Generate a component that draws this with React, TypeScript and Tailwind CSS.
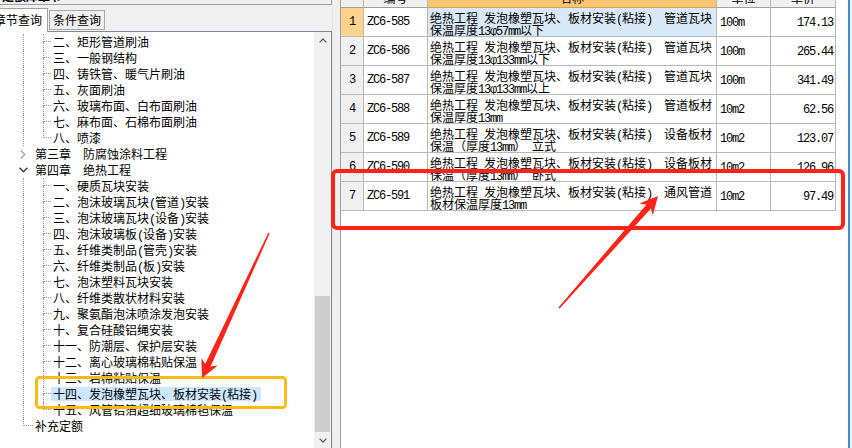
import React from "react"

const cjk = "font-['Noto_Sans_CJK_SC','Liberation_Sans',sans-serif]"
const line = "border-dotted border-[#9a9a9a]"

function M({ children }: { children: React.ReactNode }) {
    return <span className="font-['Liberation_Mono','Noto_Sans_CJK_SC',monospace] tracking-[-1.2px]">{children}</span>
}

// half-width parens like the original bitmap font
function P({ text }: { text: string }) {
    const parts = text.split(/([()])/)
    return <>{parts.map((p, i) => (p === "(" || p === ")" ? <M key={i}>{p}</M> : p))}</>
}

type Leaf = { text: string; last?: boolean; selected?: boolean }

const ch3: Leaf[] = [
    { text: "二、矩形管道刷油" },
    { text: "三、一般钢结构" },
    { text: "四、铸铁管、暖气片刷油" },
    { text: "五、灰面刷油" },
    { text: "六、玻璃布面、白布面刷油" },
    { text: "七、麻布面、石棉布面刷油" },
    { text: "八、喷漆", last: true },
]

const ch4: Leaf[] = [
    { text: "一、硬质瓦块安装" },
    { text: "二、泡沫玻璃瓦块(管道)安装" },
    { text: "三、泡沫玻璃瓦块(设备)安装" },
    { text: "四、泡沫玻璃板(设备)安装" },
    { text: "五、纤维类制品(管壳)安装" },
    { text: "六、纤维类制品(板)安装" },
    { text: "七、泡沫塑料瓦块安装" },
    { text: "八、纤维类散状材料安装" },
    { text: "九、聚氨酯泡沫喷涂发泡安装" },
    { text: "十、复合硅酸铝绳安装" },
    { text: "十一、防潮层、保护层安装" },
    { text: "十二、离心玻璃棉粘贴保温" },
    { text: "十三、岩棉粘贴保温" },
    { text: "十四、发泡橡塑瓦块、板材安装(粘接)", selected: true },
    { text: "十五、风管铝箔超细玻璃棉毡保温", last: true },
]

function LeafRow({ item }: { item: Leaf }) {
    return (
        <div className="h-[16px] flex">
            <div className="w-[23px] shrink-0" />
            <div className={`w-[20px] shrink-0 border-l ${line}`} />
            <div className="w-[8px] shrink-0 flex flex-col">
                <div className={`h-[8px] border-l border-b ${line}`} />
                <div className={`h-[8px] ${item.last ? "" : `border-l ${line}`}`} />
            </div>
            <div className={`h-[14px] my-[1px] pl-[2px] pr-[4px] leading-[14px] whitespace-nowrap ${item.selected ? "bg-[#cce8ff]" : ""}`}>
                <P text={item.text} />
            </div>
        </div>
    )
}

function ChapterRow({ text, open }: { text: string; open?: boolean }) {
    return (
        <div className="h-[16px] flex items-center">
            <div className="w-[17px] shrink-0" />
            <div className="w-[12px] shrink-0 flex justify-center">
                {open ? (
                    <svg width="9" height="6" viewBox="0 0 9 6"><polyline points="0.5,0.8 4.5,4.8 8.5,0.8" fill="none" stroke="#3a3a3a" strokeWidth="1.3" /></svg>
                ) : (
                    <svg width="6" height="9" viewBox="0 0 6 9"><polyline points="0.8,0.5 4.8,4.5 0.8,8.5" fill="none" stroke="#a6a6a6" strokeWidth="1.3" /></svg>
                )}
            </div>
            <div className="w-[6px] shrink-0" />
            <div className="leading-[16px] whitespace-nowrap">{text}</div>
        </div>
    )
}

type Row = { code: string; l1: string; l2: React.ReactNode; unit: string; price: string }

const rows: Row[] = [
    { code: "ZC6-585", l1: "管道瓦块", l2: <>保温厚度<M>13φ57mm</M>以下</>, unit: "100m", price: "174.13" },
    { code: "ZC6-586", l1: "管道瓦块", l2: <>保温厚度<M>13φ133mm</M>以下</>, unit: "100m", price: "265.44" },
    { code: "ZC6-587", l1: "管道瓦块", l2: <>保温厚度<M>13φ133mm</M>以上</>, unit: "100m", price: "341.49" },
    { code: "ZC6-588", l1: "管道板材", l2: <>保温厚度<M>13mm</M></>, unit: "10m2", price: "62.56" },
    { code: "ZC6-589", l1: "设备板材", l2: <>保温（厚度<M>13mm</M>）{"\u2002"}立式</>, unit: "10m2", price: "123.07" },
    { code: "ZC6-590", l1: "设备板材", l2: <>保温（厚度<M>13mm</M>）{"\u2002"}卧式</>, unit: "10m2", price: "126.96" },
    { code: "ZC6-591", l1: "通风管道", l2: <>板材保温厚度<M>13mm</M></>, unit: "10m2", price: "97.49" },
]

const cell = "border-r border-b border-[#b9b9b9] shrink-0 h-full"

export default function App() {
    return (
        <div className={`relative w-[852px] h-[448px] overflow-hidden flex bg-[#f0f0f0] text-[12px] text-black ${cjk}`}>
            {/* left panel */}
            <div className="w-[332px] shrink-0 flex flex-col">
                <div className="h-[5px] shrink-0 border-b border-r border-[#a0a0a0] overflow-hidden">
                    <div className="mt-[-11px] ml-[2px] leading-[14px] font-bold">定额库章节</div>
                </div>
                <div className="h-[26px] shrink-0 flex items-end">
                    <div className="relative z-10 mb-[-1px] h-[24px] w-[48px] bg-white border-t border-r border-[#a0a0a0] overflow-hidden">
                        <div className="ml-[-6px] mt-[3px] leading-[16px] whitespace-nowrap">章节查询</div>
                    </div>
                    <div className="ml-[1px] mb-[1px] h-[20px] w-[56px] border border-[#a9a9a9] bg-[#f0f0f0] pl-[3px] leading-[18px]">条件查询</div>
                </div>
                <div className="flex-1 flex bg-white border-t border-r border-[#828790] min-h-0">
                    <div className="flex-1 pt-[2px] overflow-hidden">
                        {ch3.map((it) => <LeafRow key={it.text} item={it} />)}
                        <ChapterRow text="第三章　防腐蚀涂料工程" />
                        <ChapterRow text="第四章　绝热工程" open />
                        {ch4.map((it) => <LeafRow key={it.text} item={it} />)}
                        <div className="h-[16px] flex">
                            <div className="w-[23px] shrink-0" />
                            <div className="w-[10px] shrink-0">
                                <div className={`h-[8px] border-l border-b ${line}`} />
                            </div>
                            <div className="ml-[2px] leading-[16px]">补充定额</div>
                        </div>
                    </div>
                    <div className="w-[17px] shrink-0 bg-[#f0f0f0] flex flex-col">
                        <div className="h-[17px] flex items-center justify-center">
                            <svg width="8" height="5" viewBox="0 0 8 5"><polyline points="0.6,4.4 4,1 7.4,4.4" fill="none" stroke="#606060" strokeWidth="1.3" /></svg>
                        </div>
                        <div className="flex-1 flex flex-col justify-end px-[1px]">
                            <div className="h-[136px] bg-[#cdcdcd]" />
                        </div>
                        <div className="h-[16px] flex items-center justify-center">
                            <svg width="8" height="5" viewBox="0 0 8 5"><polyline points="0.6,0.6 4,4 7.4,0.6" fill="none" stroke="#606060" strokeWidth="1.3" /></svg>
                        </div>
                    </div>
                </div>
            </div>

            {/* splitter */}
            <div className="w-[8px] shrink-0 border-l border-[#e6e6e6] bg-[#f0f0f0]" />

            {/* grid */}
            <div className="flex-1 bg-white border-l border-[#a0a0a0] flex flex-col">
                <div className="h-[8px] flex overflow-hidden">
                    <div className={`${cell} w-[23px] bg-[#f0f0f0] border-b-[#a0a0a0]`} />
                    <div className={`${cell} w-[64px] bg-[#f0f0f0] border-b-[#a0a0a0] overflow-hidden`}>
                        <div className="mt-[-9px] leading-[14px] text-center">编号</div>
                    </div>
                    <div className={`${cell} w-[289px] bg-[#f8c675] border-b-[#d9a250] overflow-hidden`}>
                        <div className="mt-[-9px] leading-[14px] text-center">名称</div>
                    </div>
                    <div className={`${cell} w-[54px] bg-[#f0f0f0] border-b-[#a0a0a0] overflow-hidden`}>
                        <div className="mt-[-9px] leading-[14px] text-center">单位</div>
                    </div>
                    <div className={`${cell} w-[65px] bg-[#f0f0f0] border-b-[#a0a0a0] overflow-hidden`}>
                        <div className="mt-[-9px] leading-[14px] text-center">单价</div>
                    </div>
                </div>
                {rows.map((r, i) => (
                    <div key={r.code} className="h-[29px] flex">
                        <div className={`${cell} w-[23px] flex items-center justify-center ${i === 0 ? "bg-[#fcd48c]" : "bg-[#f0f0f0]"}`}>
                            <M>{i + 1}</M>
                        </div>
                        <div className={`${cell} w-[64px] flex items-center pl-[3px]`}>
                            <M>{r.code}</M>
                        </div>
                        <div className={`${cell} w-[289px] pl-[2px] pt-[4px] whitespace-nowrap overflow-hidden ${i === 0 ? "bg-[#d9e9f7]" : ""}`}>
                            <div className="h-[12px] leading-[12px]">绝热工程{"\u2002"}发泡橡塑瓦块、板材安装<M>(</M>粘接<M>)</M>{"\u2003"}{r.l1}</div>
                            <div className="h-[12px] leading-[12px]">{r.l2}</div>
                        </div>
                        <div className={`${cell} w-[54px] flex items-center pl-[3px] pt-[2px]`}>
                            <M>{r.unit}</M>
                        </div>
                        <div className={`${cell} w-[65px] flex items-center justify-end pr-[2px] pt-[2px]`}>
                            <M>{r.price}</M>
                        </div>
                    </div>
                ))}
            </div>
            <div className="w-[2px] shrink-0 bg-[#3b8ddb]" />
            <div className="w-[2px] shrink-0 bg-[#f0f0f0]" />

            {/* annotations */}
            <svg className="absolute inset-0 pointer-events-none" width="852" height="448" viewBox="0 0 852 448">
                <rect x="36.5" y="377.5" width="249" height="30" rx="3" fill="none" stroke="#fdb914" strokeWidth="3" />
                <rect x="333" y="171" width="510" height="57" rx="4" fill="none" stroke="#ff2417" strokeWidth="4" />
                <polygon
                    fill="#ff2417"
                    points="269.7,233.3 210.6,366.6 217.7,365.4 202,378 201.4,357.9 205.2,364.0 268.3,232.7"
                />
                <polygon
                    fill="#ff2417"
                    points="559.6,308.5 651.0,208.5 652.8,215.5 658,196 639.3,203.5 646.5,204.5 558.4,307.5"
                />
            </svg>
        </div>
    )
}
